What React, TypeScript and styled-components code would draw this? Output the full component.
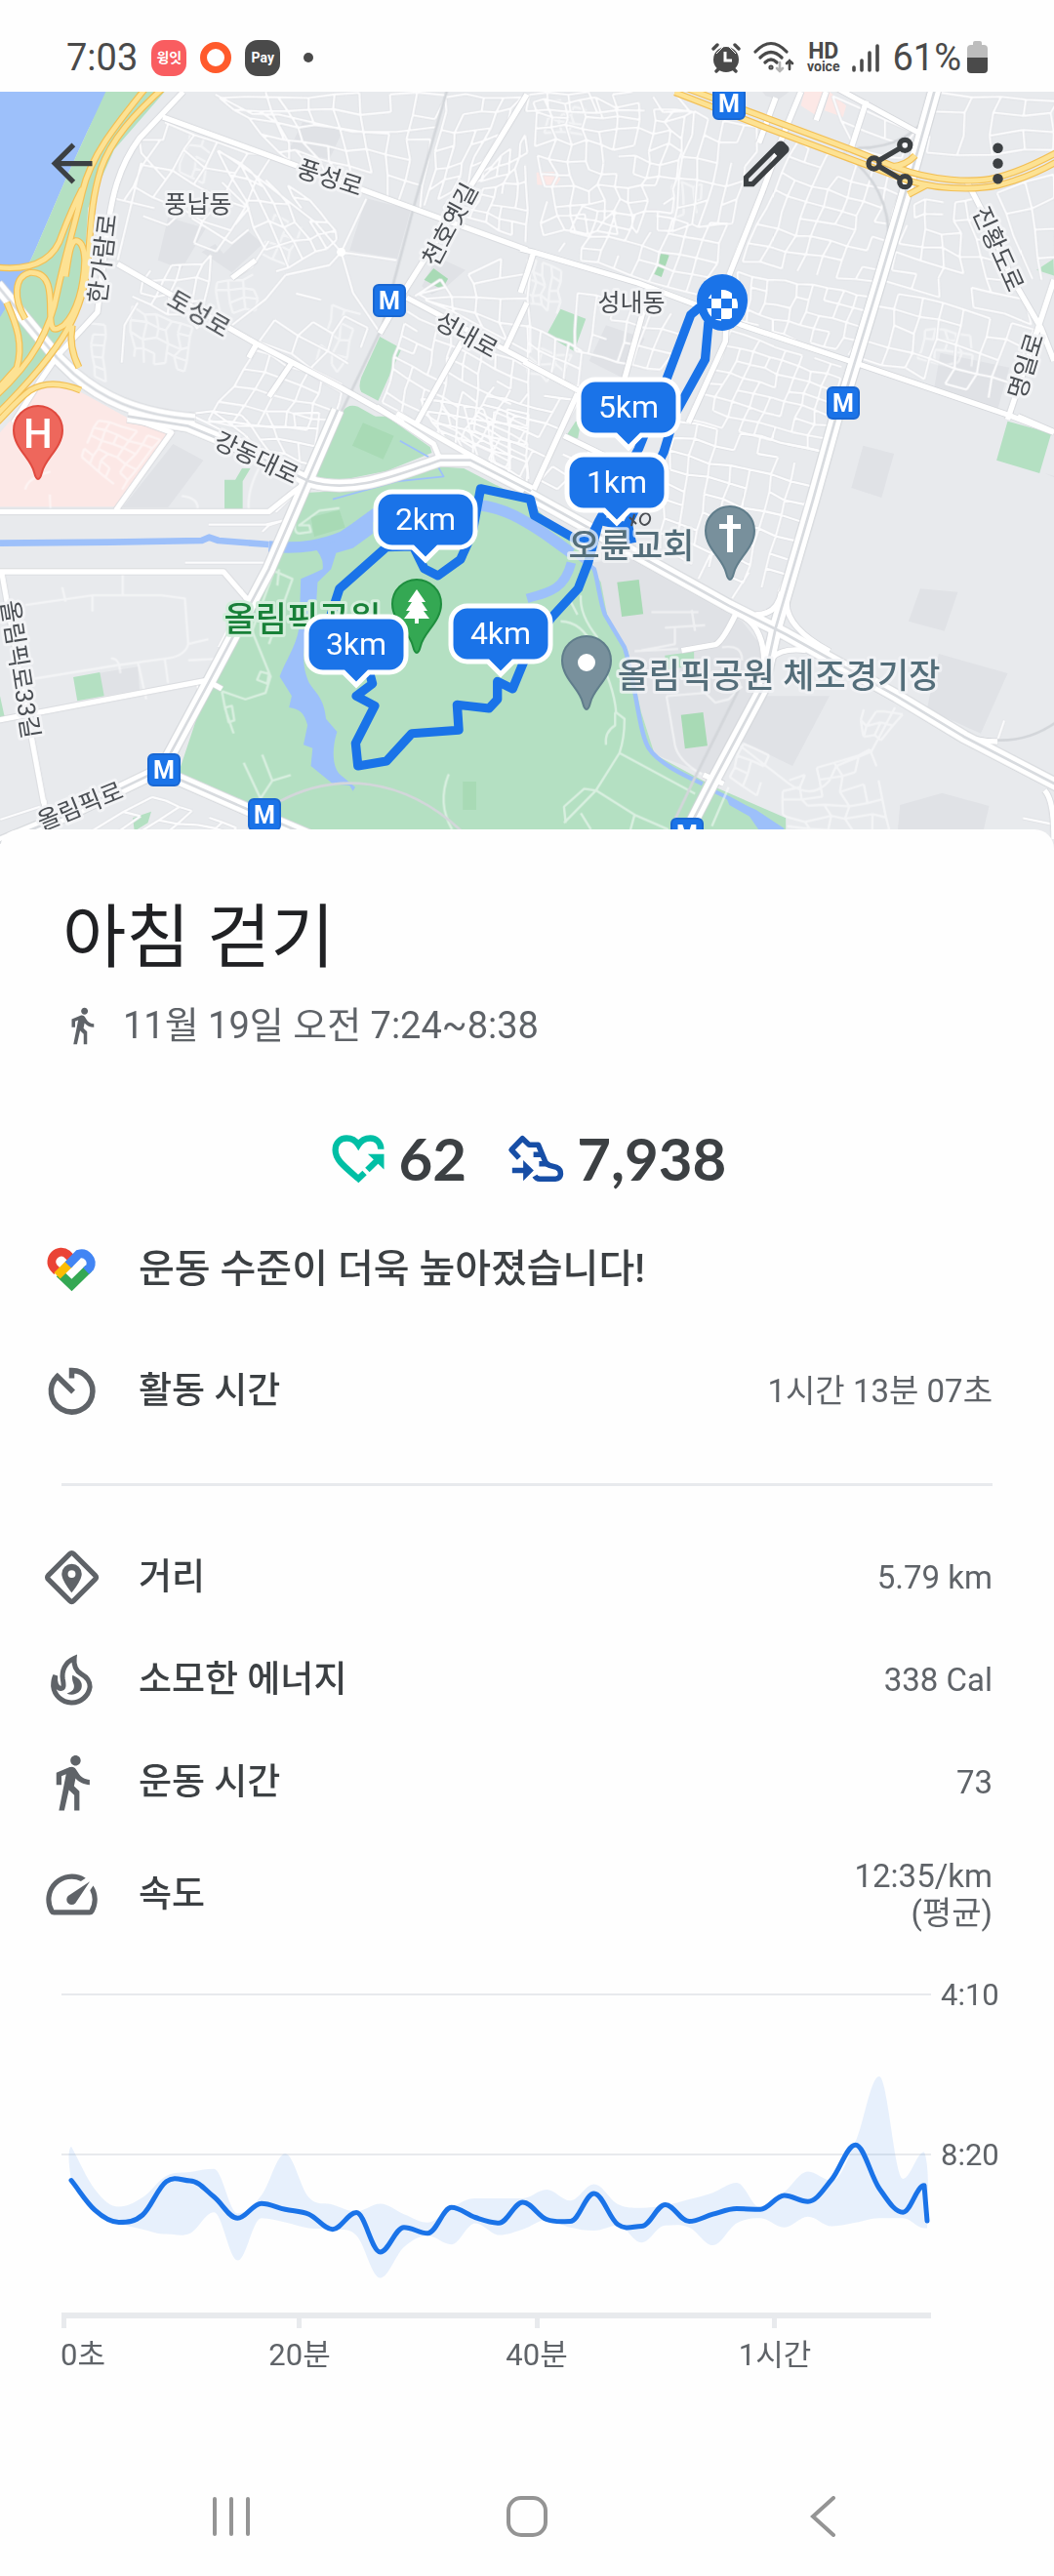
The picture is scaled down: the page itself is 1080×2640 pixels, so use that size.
import React from "react";
import styled, { createGlobalStyle } from "styled-components";

const FONT = 'Roboto, "Noto Sans CJK KR", sans-serif';

const GlobalStyle = createGlobalStyle`
  * { box-sizing: border-box; }
  body { margin: 0; background: #fefefe; font-family: ${FONT}; color: #3c4043; }
  button { font: inherit; color: inherit; background: none; border: 0; padding: 0; cursor: pointer; }
`;

const Screen = styled.main`
  display: flex;
  flex-direction: column;
  min-height: 100vh;
  background: #fefefe;
`;

/* ---------- status bar ---------- */

const StatusBar = styled.header`
  display: flex;
  align-items: center;
  justify-content: space-between;
  height: 94px;
  padding: 24px 68px 0;
  color: #4a4a4a;
`;

const StatusGroup = styled.div<{ $gap: number }>`
  display: flex;
  align-items: center;
  gap: ${(p) => p.$gap}px;
`;

const StatusText = styled.span`
  font-size: 38px;
  line-height: 44px;
`;

const AppBadge = styled.span<{ $color: string }>`
  display: flex;
  align-items: center;
  justify-content: center;
  width: 36px;
  height: 37px;
  border-radius: 13px;
  background: ${(p) => p.$color};
  color: #fff;
  font-size: 14px;
  font-weight: 700;
  line-height: 20px;
`;

const Ring = styled.span`
  width: 32px;
  height: 32px;
  border: 7px solid #ff5a2b;
  border-radius: 50%;
`;

const Dot = styled.span`
  width: 10px;
  height: 10px;
  margin-left: 10px;
  border-radius: 50%;
  background: #4a4a4a;
`;

const HdVoice = styled.span`
  display: flex;
  flex-direction: column;
  align-items: center;
  font-weight: 700;
  font-size: 23px;
  line-height: 18px;
  small {
    font-size: 14px;
    line-height: 12px;
  }
`;

/* ---------- map ---------- */

const MapArea = styled.section`
  position: relative;
  height: 780px;
  overflow: hidden;
  background: #e8eaed;
`;

const MapSvg = styled.svg`
  display: block;
  width: 100%;
  height: 100%;
`;

const Toolbar = styled.nav`
  position: absolute;
  top: 0;
  left: 0;
  right: 0;
  display: flex;
  justify-content: space-between;
  height: 147px;
  padding-right: 10px;
`;

const ToolbarActions = styled.div`
  display: flex;
`;

const ToolButton = styled.button<{ $width: number }>`
  display: flex;
  align-items: center;
  justify-content: center;
  width: ${(p) => p.$width}px;
  height: 147px;
  color: #3c4043;
`;

const Icon = styled.svg<{ $size?: number }>`
  display: block;
  flex: none;
  width: ${(p) => p.$size ?? 63}px;
  height: ${(p) => p.$size ?? 63}px;
  fill: currentColor;
`;

/* ---------- sheet ---------- */

const Sheet = styled.section`
  position: relative;
  flex: 1;
  margin-top: -24px;
  padding-top: 69px;
  border-radius: 20px 20px 0 0;
  background: #fefefe;
`;

const Title = styled.h1`
  margin: 0 64px;
  font-size: 71px;
  font-weight: 400;
  line-height: 84px;
  color: #202124;
`;

const DateLine = styled.p`
  display: flex;
  align-items: center;
  gap: 21px;
  height: 48px;
  margin: 24px 63px 0;
  font-size: 38px;
  line-height: 48px;
  color: #5f6368;
`;

const Scores = styled.div`
  display: flex;
  justify-content: center;
  gap: 40px;
  height: 64px;
  margin-top: 80px;
`;

const Score = styled.div`
  display: flex;
  align-items: center;
  gap: 10px;
  font-family: Lato, sans-serif;
  font-size: 60px;
  font-weight: 700;
  line-height: 64px;
`;

const Message = styled.p`
  display: flex;
  align-items: center;
  gap: 37px;
  height: 105px;
  margin: 29px 42px 20px;
  font-size: 40px;
  font-weight: 500;
  line-height: 48px;
`;

const Metrics = styled.dl`
  margin: 0;
  padding: 0 63px 0 42px;
`;

const Metric = styled.div<{ $tall?: boolean }>`
  display: flex;
  align-items: center;
  gap: 37px;
  height: ${(p) => (p.$tall ? 125 : 105)}px;
  svg { color: #5f6368; }
`;

const MetricName = styled.dt`
  flex: 1;
  font-size: 37px;
  font-weight: 500;
  line-height: 44px;
`;

const MetricValue = styled.dd`
  margin: 0;
  font-size: 33px;
  line-height: 38px;
  text-align: right;
  white-space: pre-line;
  color: #5f6368;
`;

const Divider = styled.hr`
  height: 3px;
  margin: 42px 63px 41px;
  border: 0;
  background: #e8eaed;
`;

const ChartBox = styled.figure`
  margin: 15px 53px 0 63px;
`;

const ChartSvg = styled.svg`
  display: block;
  width: 100%;
  height: auto;
  font-size: 31px;
  fill: #5f6368;
`;

const NavBar = styled.nav`
  display: flex;
  height: 120px;
  margin-top: 80px;
  padding: 0 86px;
`;

const NavButton = styled.button`
  display: flex;
  flex: 1;
  align-items: center;
  justify-content: center;
`;

type Pt = [number, number];

function mesh(q: [Pt, Pt, Pt, Pt], cols: number, rows: number, jitter = 9, seed = 1): string {
  let s = seed * 7919 + cols * 131 + rows * 17;
  const rnd = () => {
    s = (s * 16807) % 2147483647;
    return s / 2147483647;
  };
  const [a, b, c, d] = q;
  const grid: Pt[][] = [];
  for (let r = 0; r <= rows; r++) {
    const line: Pt[] = [];
    for (let k = 0; k <= cols; k++) {
      const u = k / cols;
      const v = r / rows;
      const at = (i: 0 | 1) =>
        (1 - v) * ((1 - u) * a[i] + u * b[i]) + v * ((1 - u) * d[i] + u * c[i]) + (rnd() - 0.5) * 2 * jitter;
      line.push([Math.round(at(0)), Math.round(at(1))]);
    }
    grid.push(line);
  }
  let out = "";
  for (let r = 0; r <= rows; r++)
    for (let k = 0; k <= cols; k++) {
      if (k < cols && rnd() > 0.2) out += `M${grid[r][k]}L${grid[r][k + 1]}`;
      if (r < rows && rnd() > 0.14) out += `M${grid[r][k]}L${grid[r + 1][k]}`;
    }
  return out;
}

interface Tile {
  x: number;
  y: number;
  blocks: string;
  pink: string;
  park: string;
  lawn: string;
  minor: string[];
  faint: string[];
  rail: string;
  major: string;
  dual: string;
  highway: string;
}

const TILES: Tile[] = [
  {
    x: 0,
    y: 0,
    blocks:
      "M900 375L1020 402 980 490 860 462ZM1090 610L1222 645 1182 795 1040 770ZM500 668L612 702 540 828 470 800ZM600 775L640 750 665 780 735 708 782 750 690 838ZM1300 790L1385 830 1330 880 1285 905 1255 880Z",
    pink: "",
    park: "M320 270H500L340 460 262 640 245 900 170 1075 0 1270V975L40 910 100 780 200 540 262 400ZM1130 1035L1195 1072 1125 1232 1075 1205Q1065 1190 1075 1160ZM1010 1300L1020 1265Q1035 1240 1065 1250L1150 1300Z",
    lawn: "M1290 825L1333 857 1315 890 1262 860Z",
    minor: [
      mesh([[500, 385], [800, 490], [640, 780], [360, 620]], 4, 4, 14, 2),
      mesh([[660, 290], [1320, 290], [1240, 640], [870, 500]], 8, 5, 12, 3),
      mesh([[1330, 290], [1550, 300], [1420, 540], [1270, 640]], 4, 6, 10, 4),
      mesh([[1420, 550], [1568, 420], [1568, 740], [1320, 640]], 6, 7, 7, 5),
      mesh([[650, 470], [900, 590], [1010, 740], [830, 840]], 5, 5, 12, 6),
      mesh([[450, 840], [640, 790], [600, 1000], [400, 920]], 4, 3, 14, 7),
      mesh([[880, 900], [1100, 1000], [1010, 1190], [780, 1040]], 3, 3, 12, 8),
      mesh([[760, 1070], [1010, 1200], [990, 1320], [620, 1300]], 5, 4, 8, 9),
      mesh([[1210, 960], [1568, 1130], [1568, 1500], [1140, 1240]], 8, 8, 5, 10),
      mesh([[1230, 900], [1568, 770], [1568, 1080], [1290, 930]], 4, 4, 10, 11),
      "M790 282L810 350 860 440V490M640 290L750 350 830 352 1050 405H1180L1300 390M1015 775L1180 800M1015 775L980 815 850 845M1015 775L1090 610M1015 775L940 685 760 540 650 462M1015 775L1050 900 1125 1015M850 845L790 920 690 1000M415 430L420 470 490 550M415 430H485L500 380M340 610L460 640M570 670L690 748 740 705M690 855L750 820 800 740M410 930L370 1000 362 1115M660 560L740 640 700 690M420 500L350 800",
    ],
    faint: [
      mesh([[570, 410], [640, 440], [600, 560], [530, 530]], 2, 4, 6, 2),
      mesh([[400, 950], [580, 1010], [550, 1140], [390, 1100]], 5, 4, 10, 3),
      mesh([[650, 860], [760, 850], [760, 950], [650, 960]], 3, 3, 8, 4),
      mesh([[820, 660], [895, 700], [850, 810], [780, 780]], 2, 3, 5, 5),
      mesh([[990, 940], [1070, 960], [1010, 1140], [950, 1110]], 2, 4, 8, 6),
      mesh([[270, 990], [310, 1000], [310, 1170], [280, 1160]], 1, 5, 5, 7),
    ],
    rail: "M1332 270L1230 640 1135 1010 1000 1300",
    major:
      "M545 282L415 425C340 530 330 640 320 700L290 960 170 1095 120 1170 40 1300M485 360L870 505 1280 660 1568 768M350 812L760 1055 1010 1190 1200 1300M1568 290L1420 540 1200 900 1130 1025M1210 915L1568 1112M1568 930L1500 1080M1375 1050L1240 1300M690 855L760 800M765 1055L740 1100M865 1120L800 1220",
    dual: "M-10 875L170 1100 220 1150C300 1220 400 1275 580 1290",
    highway:
      "M440 262C340 390 270 480 245 590C215 720 190 800 170 900C150 1010 100 1110 -10 1215M490 266C400 350 330 430 300 520C270 620 270 700 262 800C250 950 200 1060 -10 1275M-10 822C110 835 165 790 185 720C215 640 230 610 245 580M75 980C40 920 40 850 90 838C150 835 150 900 150 960C150 1020 160 1020 190 1000C230 960 250 880 252 800C250 750 235 740 225 740C210 745 205 780 195 850M20 930C50 1000 70 1060 50 1130L-10 1200M215 1000C205 1060 220 1100 235 1130M240 1200C180 1175 130 1175 90 1200C50 1230 20 1270 -10 1300",
  },
  {
    x: 1568,
    y: 0,
    blocks: "M235 1000L350 1040 290 1165 185 1110ZM1230 1085L1435 1130 1400 1260 1210 1200ZM700 282H780L750 305 710 295Z",
    pink: "M825 282H880L860 355 815 325ZM900 282L950 325 940 360 885 340ZM28 530L85 528 100 550 85 572 30 568Z",
    park: "M100 950L175 980 140 1080 58 1030ZM1516 830L1575 790V850Z",
    lawn: "M400 775L423 785 400 852 372 840Z",
    minor: [
      mesh([[10, 300], [480, 330], [420, 700], [60, 720]], 9, 9, 15, 12),
      mesh([[490, 340], [690, 400], [600, 680], [440, 700]], 4, 5, 12, 13),
      mesh([[160, 640], [650, 700], [580, 930], [100, 780]], 9, 4, 7, 14),
      mesh([[0, 290], [440, 290], [480, 340], [0, 340]], 7, 1, 8, 15),
      mesh([[800, 430], [1120, 560], [1040, 870], [640, 800]], 7, 7, 8, 16),
      mesh([[630, 840], [1030, 910], [960, 1090], [610, 980]], 9, 4, 5, 17),
      mesh([[610, 1020], [940, 1130], [880, 1385], [480, 1290]], 8, 7, 6, 18),
      mesh([[1160, 620], [1330, 620], [1500, 990], [1060, 860]], 5, 6, 12, 19),
      mesh([[1050, 880], [1500, 1010], [1440, 1240], [1000, 1100]], 7, 4, 10, 20),
      mesh([[1230, 290], [1568, 300], [1568, 460], [1180, 480]], 4, 3, 12, 21),
      mesh([[1400, 590], [1568, 530], [1568, 870], [1500, 860]], 2, 4, 8, 22),
      mesh([[910, 300], [1150, 410], [1110, 490], [970, 450]], 3, 2, 6, 23),
      mesh([[150, 900], [480, 970], [400, 1140], [140, 1080]], 6, 3, 5, 24),
      mesh([[0, 1000], [160, 1080], [150, 1190], [0, 1110]], 4, 2, 5, 25),
    ],
    faint: [
      mesh([[60, 310], [180, 330], [160, 420], [60, 400]], 3, 3, 10, 8),
      mesh([[430, 560], [530, 570], [520, 660], [450, 660]], 3, 2, 10, 9),
      mesh([[0, 800], [100, 830], [90, 960], [0, 930]], 4, 4, 8, 10),
      mesh([[1180, 1010], [1320, 1030], [1330, 1130], [1160, 1100]], 4, 3, 10, 11),
      mesh([[10, 1060], [130, 1100], [100, 1180], [0, 1140]], 3, 2, 10, 12),
    ],
    rail: "M970 455C1100 460 1170 400 1200 340M940 470C1040 540 1080 640 1075 740",
    major:
      "M-20 765L20 775 330 870 510 940 640 1000 960 1110 1430 1275 1568 1330M20 775L0 840-20 900M-10 1112L160 1205M815 282L760 420 700 590 600 850 590 1050 480 1300M890 282L860 370M740 300L690 440M920 270L1165 408M1010 310L960 470M1310 560L1360 660 1440 850 1530 1010 1568 1110M1568 860L1520 1010 1430 1290M350 940L290 1165",
    dual: "M1215 270L1150 510 1050 860 950 1200",
    highway:
      "M440 258L700 358 960 458 1100 515C1200 555 1330 565 1400 545C1460 530 1520 500 1575 470M440 284L700 388 960 488 1100 542C1200 585 1330 585 1400 570C1460 555 1520 530 1575 498M1085 512C1120 510 1140 495 1155 478M1135 598L1190 568",
  },
  {
    x: 0,
    y: 1290,
    blocks: "M515 75L605 125 500 270H365ZM290 780L410 760 415 830 310 850Z",
    pink: "M0 268H345L500 40 380-5 240-85C180-108 130-105 100-80L0 40Z",
    park: "M1005-10H1150L1280 85 1285 102 1150 158 1020 185 940 178ZM905 225L1100 215 1300 145 1380 150 1568 250 1698 370 1758 450 1788 500 1808 610 1868 710 1908 900 1948 1030 2128 1130 2338 1225V1300H980L900 1262 530 1090 620 810 740 560 830 390ZM668 185H700L720 150H745L722 190V275H668ZM218 792L297 777 310 850 230 865ZM395 1225L450 1205 440 1240 400 1265ZM0 850L15 920H0Z",
    lawn: "M1080 10L1172 50 1140 122 1048 80ZM1377 1113H1417V1200H1377ZM925 300L1010 278 1027 332 935 360Z",
    minor: [
      mesh([[560, -20], [950, -20], [930, 140], [720, 60]], 5, 3, 8, 26),
      mesh([[450, 1160], [700, 1250], [680, 1310], [200, 1310]], 6, 3, 6, 27),
      mesh([[1250, -60], [1568, -20], [1568, 180], [1330, 70]], 5, 4, 5, 28),
      "M550 440H785M620 323H790L845 310M865 240L820 285M585 810L600 870M720 560L650 700M165 1230L130 1180M780 345L800 325 840 312M0 1230L120 1190",
    ],
    faint: [
      mesh([[290, 0], [480, 60], [360, 215], [240, 115]], 5, 5, 5, 13),
      "M75 570L275 540H480L550 550 560 690Q550 730 490 735L350 755 80 800M275 540V590M365 470V540M195 560L185 515M410 745L435 860M490 735L500 810M560 740L650 735M560 690L620 675M330 735Q355 730 358 780M660 835L730 860 790 840 805 790 750 650 815 465M815 465L870 490 800 690M830 460L825 510M725 1055L775 1165 810 1110 865 1093M810 1110L780 1030M660 835L670 890 695 965M670 885L690 880 697 925 680 930ZM765 800L775 775 800 782 795 812ZM880 290Q870 350 890 350L925 345 920 325 890 325 950 280 1010 272M1335 1090Q1300 1180 1345 1260M540 235Q590 240 588 275M75 215Q80 180 150 160M150 275L148 230M740 275Q735 220 770 150",
    ],
    rail: "M830 1175C1000 1080 1200 1100 1370 1262",
    major:
      "M-10 283H800L870 225 910 195M345 278L510 40 380-10M-10 468H665L735 552M5 470L60 790 130 1180M-10 925L610 803M620 805L660 828M1120-40L1210 20 1290 75 1312 130M1180-20L1400 110 1568 205M140 1240L130 1170",
    dual: "M380-10L560 20 700 80 920 190C1050 230 1180 170 1310 125H1400L1580 220M-10 1305L200 1215 460 1085M530 1105L740 1200 920 1280M1005-30L800 460 620 810 500 1040",
    highway: "",
  },
  {
    x: 1568,
    y: 1290,
    blocks:
      "M190 440L300 425 640 620 700 700 690 830 560 1100 380 1030 340 900 300 710 240 610ZM690 850L900 850 790 1065 640 990ZM1225 720L1430 780 1350 965 1190 890ZM1000 80L1092 105 1055 240 965 210ZM1170 520L1282 530 1242 650 1135 620ZM1110 1185L1235 1148 1375 1188 1350 1300H1100ZM1540 165L1575 175V180Z",
    pink: "",
    park: "M1430 5L1560 42 1525 165 1397 125ZM410 725L497 713V755L415 770ZM120 45L145 5 160 10 150 65Z",
    lawn: "M268 500L333 492 346 598 282 606ZM458 908L524 900 537 1003 470 1012Z",
    minor: [
      mesh([[-100, -100], [150, -60], [20, 210], [-200, 60]], 5, 6, 4, 29),
      mesh([[440, 0], [880, 95], [750, 535], [390, 400]], 7, 8, 7, 30),
      mesh([[140, 60], [300, 150], [200, 270], [40, 190]], 3, 3, 5, 31),
      "M610 550L660 470M510 490L545 415M1400 985L1420 925M1475 1225L1568 1245",
    ],
    faint: [
      mesh([[640, 1000], [720, 1030], [680, 1150], [600, 1100]], 2, 3, 6, 14),
      mesh([[770, 1120], [1030, 1020], [1090, 1260], [770, 1260]], 5, 5, 12, 15),
      mesh([[990, 890], [1110, 900], [1060, 990], [990, 960]], 3, 2, 12, 16),
      "M100 620Q160 620 200 700Q260 820 265 900L290 920Q290 980 275 1025L205 1140 110 1240M275 1025L500 1150M235 1000Q230 960 262 940V900M205 1140L320 1215 300 1290M205 1140L170 1135 110 1190 115 1240M320 1215L420 1260M160 540Q155 600 210 670M130 560L150 600M160 1210L190 1260M600 1130L550 1250M340 710L440 690V640M410 640L530 632M370 592H510M490 585L500 650M320 712L450 705M415 850L440 1000Q450 1050 520 1090M415 850L530 840 560 870 600 860 640 820M580 700Q640 690 640 740M780 1120Q850 1170 900 1110L920 1065 1025 1020 1095 885M630 1000L780 1120",
    ],
    rail: "M1270 955C1400 1010 1500 985 1575 930M630 830L500 1100 440 1230",
    major:
      "M620 600Q580 685 560 692L460 710M650 610Q705 650 705 745M680 600Q745 600 757 530M772 560Q770 640 900 712M725 735Q760 700 830 710M110 50L230 110M150-80L20 215M1460-10L1568 38M525 1092L585 1120M1250 955Q1330 990 1400 990M1540 1140Q1568 1170 1568 1290",
    dual: "M-10 222L300 400 600 572 770 660 1100 850 1300 975 1580 1125M920-10L850 250 740 640 700 830 550 1120 470 1280",
    highway: "",
  },
];

type LayerKey = "blocks" | "pink" | "park" | "lawn" | "minor" | "faint" | "rail" | "major" | "dual" | "highway";

function Layer({ of, fill = "none", stroke, width = 1 }: { of: LayerKey; fill?: string; stroke?: string; width?: number }) {
  return (
    <g fill={fill} stroke={stroke} strokeWidth={width} strokeLinejoin="round">
      {TILES.map((t) => {
        const v = t[of];
        const d = Array.isArray(v) ? v.join("") : v;
        return d ? <path key={`${t.x}-${t.y}`} transform={`translate(${t.x} ${t.y})`} d={d} /> : null;
      })}
    </g>
  );
}

const ROUTE =
  "M2100-350L2078-342 2055-322 1978-110 1900 90 1783 310 1755 368 1708 365 1590 295 1578 245 1430 212 1405 350 1370 430 1303 480 1262 458 1230 390 1150 392 1010 520 985 600 1100 780 1108 812 1060 850 1115 880 1058 995 1065 1065 1150 1050 1225 965 1365 955 1360 877 1455 888 1480 860V805L1525 828 1568 720 1640 610 1720 520 1750 440 1783 310M2108-300L2098-185 2010-20 1975 100 1868 320 1880 380M1783 310L1868 330";

const KM_PINS: { label: string; x: number; y: number }[] = [
  { label: "2km", x: 436, y: 578 },
  { label: "4km", x: 513, y: 695 },
  { label: "3km", x: 365, y: 706 },
  { label: "5km", x: 644, y: 463 },
  { label: "1km", x: 632, y: 540 },
];

const STREET_NAMES: { text: string; x: number; y: number; turn: number }[] = [
  { text: "풍납동", x: 203, y: 209, turn: 0 },
  { text: "풍성로", x: 338, y: 182, turn: 18 },
  { text: "천호옛길", x: 461, y: 230, turn: -62 },
  { text: "한가람로", x: 105, y: 265, turn: -83 },
  { text: "토성로", x: 204, y: 321, turn: 30 },
  { text: "성내로", x: 478, y: 343, turn: 29 },
  { text: "성내동", x: 647, y: 310, turn: 0 },
  { text: "진황도로", x: 1023, y: 255, turn: 66 },
  { text: "명일로", x: 1051, y: 375, turn: -73 },
  { text: "강동대로", x: 263, y: 469, turn: 25 },
  { text: "올림픽로33길", x: 21, y: 686, turn: 81 },
  { text: "올림픽로", x: 82, y: 826, turn: -22 },
];

const STATIONS: Pt[] = [
  [399, 308],
  [747, 106],
  [864, 413],
  [168, 789],
  [271, 835],
  [704, 855],
];

function Place({ x, y, fill, edge, children }: { x: number; y: number; fill: string; edge: string; children: React.ReactNode }) {
  return (
    <g transform={`translate(${x} ${y})`}>
      <path
        d="M0-1C-2-1-3-4-4-8C-7-22-25-33-25-51A25 25 0 0 1 25-51C25-33 7-22 4-8C3-4 2-1 0-1Z"
        fill={fill}
        stroke={edge}
        strokeWidth={2}
      />
      {children}
    </g>
  );
}

function WalkMap() {
  return (
    <MapSvg viewBox="0 94 1080 780" preserveAspectRatio="xMidYMin slice" role="img" aria-label="걷기 경로 지도">
      <g transform="scale(0.34439 0.33333)">
        <rect width={3136} height={2700} fill="#e8eaed" />
        <path d="M0 270H326L262 400 200 540 100 780 40 910 0 985Z" fill="#9dc0fa" />
        <Layer of="blocks" fill="#e0e2e6" />
        <Layer of="pink" fill="#fce8e6" />
        <Layer of="park" fill="#b4e0c2" />
        <Layer of="lawn" fill="#a8dab5" />
        <g transform="translate(0 1290)" fill="none" stroke="#9dc0fa" strokeLinejoin="round">
          <path d="M0 380L330 377 600 372 622 362 650 372 800 384" strokeWidth={20} />
          <path d="M800 390C900 400 960 385 1020 360C1080 320 1100 300 1130 280" strokeWidth={34} />
          <path d="M1420 262C1500 270 1560 310 1620 350L1700 410" strokeWidth={34} />
          <path d="M1700 440C1680 520 1640 530 1568 550" strokeWidth={28} />
          <path d="M1690 400L1768 460C1780 500 1785 560 1800 600L1858 700C1890 800 1900 960 1930 1010C1960 1060 2050 1100 2090 1120" strokeWidth={13} />
          <path d="M2120 1140L2170 1165 2260 1215 2330 1262" strokeWidth={12} />
          <path d="M2160 1160L2250 1200 2340 1265H2260L2230 1220 2170 1185Z" fill="#9dc0fa" stroke="none" />
          <path d="M990 245L1180 190 1320 175 1305 148M1190 65L1275 115" strokeWidth={5} />
          <path
            d="M930 390Q965 420 960 460 930 475 895 490L890 640C880 700 850 740 832 790L868 850 860 885C890 890 905 900 915 940L903 1000 930 1010 925 1065 990 1120 1040 1125 1050 1142 1057 1130 1010 1090C985 1060 990 1000 1003 960L970 920C965 860 940 840 920 810C890 740 910 700 912 640L940 580 945 500 985 460 1000 410 1050 395 1110 350V300L1000 375Z"
            fill="#9dc0fa"
            stroke="none"
          />
        </g>
        <g opacity={0.5}>
          <Layer of="faint" stroke="#ffffff" width={7} />
        </g>
        <Layer of="minor" stroke="#d9dbdf" width={9} />
        <Layer of="minor" stroke="#fcfcfd" width={7} />
        <Layer of="rail" stroke="#d3d6da" width={8} />
        <Layer of="major" stroke="#d3d5d9" width={20} />
        <Layer of="dual" stroke="#cfd2d6" width={42} />
        <Layer of="major" stroke="#ffffff" width={16} />
        <Layer of="dual" stroke="#ffffff" width={37} />
        <Layer of="dual" stroke="#d8dbdf" width={8} />
        <Layer of="highway" stroke="#f2bf55" width={21} />
        <Layer of="highway" stroke="#fde293" width={14} />
        <circle cx={1015} cy={775} r={13} fill="#fff" />
        <path
          transform="translate(0 1290)"
          d={ROUTE}
          fill="none"
          stroke="#1a73e8"
          strokeWidth={27}
          strokeLinejoin="round"
        />
      </g>

      <g fontFamily={FONT} textAnchor="middle" stroke="#f3f4f6" strokeWidth={6} strokeLinejoin="round" paintOrder="stroke">
        <g fontSize={25} fill="#4a4e53">
          {STREET_NAMES.map((s) => (
            <text key={s.text} transform={`translate(${s.x} ${s.y}) rotate(${s.turn})`} y={9}>
              {s.text}
            </text>
          ))}
        </g>
        <g fontSize={35} fontWeight={500}>
          <text x={310} y={647} fill="#188038" stroke="#d5eedd">
            올림픽공원
          </text>
          <text x={647} y={572} fill="#546e7a" strokeOpacity={0.75}>
            오륜교회
          </text>
          <text x={798} y={705} fill="#546e7a" strokeOpacity={0.8}>
            올림픽공원 체조경기장
          </text>
        </g>
      </g>
      <g fill="none" stroke="#4a4e53" strokeWidth={2}>
        <ellipse cx={661} cy={532} rx={5} ry={6} transform="rotate(20 661 532)" />
        <path d="M645 530L652 537M650 527L647 539" />
      </g>

      {STATIONS.map(([x, y]) => (
        <g key={`${x}-${y}`} transform={`translate(${x} ${y})`}>
          <rect x={-16} y={-16} width={32} height={32} rx={5} fill="#1a73e8" stroke="#1967d2" strokeWidth={2} />
          <text y={9} textAnchor="middle" fontFamily={FONT} fontSize={25} fontWeight={700} fill="#fff">
            M
          </text>
        </g>
      ))}

      <Place x={39} y={492} fill="#ee675c" edge="#e04a3f">
        <text y={-33} textAnchor="middle" fontFamily={FONT} fontSize={42} fontWeight={500} fill="#fff">
          H
        </text>
      </Place>
      <Place x={427} y={670} fill="#34a853" edge="#1e8e3e">
        <path d="M0-66L9-53H5L11-44H7L13-36H2V-31H-2V-36H-13L-7-44H-11L-5-53H-9Z" fill="#fff" />
      </Place>
      <Place x={748} y={595} fill="#78909c" edge="#607d8b">
        <path d="M-3-67H3V-58H11V-53H3V-29H-3V-53H-11V-58H-3Z" fill="#fff" />
      </Place>
      <Place x={601} y={728} fill="#78909c" edge="#607d8b">
        <circle cy={-49} r={9} fill="#fff" />
      </Place>

      {KM_PINS.map((p) => (
        <g key={p.label} transform={`translate(${p.x} ${p.y})`}>
          <path
            d="M-34-74H34A17 17 0 0 1 51-57V-34A17 17 0 0 1 34-17H13L0-4L-13-17H-34A17 17 0 0 1-51-34V-57A17 17 0 0 1-34-74Z"
            fill="#1a73e8"
            stroke="#fff"
            strokeWidth={5}
          />
          <text y={-35} textAnchor="middle" fontFamily={FONT} fontSize={32} fill="#fff">
            {p.label}
          </text>
        </g>
      ))}

      <g transform="translate(740 307)">
        <path d="M0-26A26 26 0 0 1 26 0C26 18 14 32 0 32C-14 32-26 18-26 0A26 26 0 0 1 0-26Z" fill="#1a73e8" />
        <clipPath id="flag">
          <circle cy={6} r={16} />
        </clipPath>
        <path
          clipPath="url(#flag)"
          d="M-1-10H10V-1H-1ZM-20-10H-11V-1H-20ZM-11-1H-1V9H-11ZM10-1H20V9H10ZM-1 9H10V20H-1ZM-20 9H-11V20H-20ZM-11 20H-1V26H-11Z"
          fill="#fff"
        />
      </g>
    </MapSvg>
  );
}

/* ---------- pace chart ---------- */

const AVERAGE = [
  577, 652, 682, 664, 580, 578, 618, 672, 635, 650, 662, 700, 658, 757, 695, 710, 645, 670, 684, 632, 675, 680, 610, 688,
  692, 638, 680, 662, 648, 650, 615, 630, 575, 488, 597, 657, 590,
];
const FASTEST = [
  492, 600, 643, 620, 566, 556, 548, 660, 615, 510, 620, 638, 655, 636, 662, 683, 645, 622, 622, 622, 600, 628, 587, 637,
  646, 640, 625, 608, 583, 646, 607, 555, 578, 480, 316, 573, 506,
];
const SLOWEST = [
  577, 660, 685, 700, 712, 710, 657, 778, 672, 682, 697, 700, 715, 822, 745, 716, 738, 685, 714, 700, 676, 695, 703, 690,
  733, 690, 695, 740, 685, 672, 695, 668, 692, 683, 672, 672, 697,
];

const chartX = (i: number) => (i === 36 ? 884 : 10 + 24.35 * i);
const chartY = (v: number) => v * 0.4082 - 20;

interface Knot {
  x: number;
  y: number;
  m: number;
}

/* Slopes are zero at peaks and dips, so the curve never overshoots a sample. */
function curve(values: number[]): Knot[] {
  const pts = values.map((v, i) => ({ x: chartX(i), y: chartY(v) }));
  return pts.map((p, i) => {
    if (i === 0) return { ...p, m: (pts[1].y - p.y) / (pts[1].x - p.x) };
    if (i === pts.length - 1) return { ...p, m: 0 };
    const l = (p.y - pts[i - 1].y) / (p.x - pts[i - 1].x);
    const r = (pts[i + 1].y - p.y) / (pts[i + 1].x - p.x);
    return { ...p, m: l * r <= 0 ? 0 : (l + r) / 2 };
  });
}

function trace(pts: Knot[]): string {
  return pts
    .slice(1)
    .map((p, i) => {
      const a = pts[i];
      const h = (p.x - a.x) / 2.8;
      return `C${(a.x + h).toFixed(1)} ${(a.y + a.m * h).toFixed(1)} ${(p.x - h).toFixed(1)} ${(p.y - p.m * h).toFixed(1)} ${p.x.toFixed(1)} ${p.y.toFixed(1)}`;
    })
    .join("");
}

function PaceChart() {
  const avg = curve(AVERAGE);
  const top = curve(FASTEST);
  const low = curve(SLOWEST).reverse();
  const band = `M${top[0].x} ${top[0].y}${trace(top)}Q890 200 887 ${low[0].y}L${low[0].x} ${low[0].y}${trace(low)}Q5 185 ${top[0].x} ${top[0].y}Z`;
  return (
    <ChartSvg viewBox="0 0 964 420" fontFamily={FONT} role="img" aria-label="시간별 속도">
      <path d="M0 25H891M0 189H891" stroke="#e8eaed" strokeWidth={2} />
      <path d={band} fill="#1a73e8" fillOpacity={0.1} />
      <path
        d={`M${avg[0].x} ${avg[0].y}${trace(avg)}L887 257`}
        fill="none"
        stroke="#1a73e8"
        strokeWidth={5}
        strokeLinecap="round"
        strokeLinejoin="round"
      />
      <path d="M0 351H891V357H0ZM0 357H5V367H0ZM241 357H246V367H241ZM485 357H490V367H485ZM728 357H733V367H728Z" fill="#e8eaed" />
      <text x={901} y={36}>4:10</text>
      <text x={901} y={200}>8:20</text>
      <text x={-1} y={405}>0초</text>
      <g textAnchor="middle">
        <text x={244} y={405}>20분</text>
        <text x={487} y={405}>40분</text>
        <text x={731} y={405}>1시간</text>
      </g>
    </ChartSvg>
  );
}

/* ---------- icons ---------- */

const WALK =
  "M13.5 5.5c1.1 0 2-.9 2-2s-.9-2-2-2-2 .9-2 2 .9 2 2 2zM9.8 8.9 7 23h2.1l1.8-8 2.1 2v6h2v-7.5l-2.1-2 .6-3C14.8 12 16.8 13 19 13v-2c-1.9 0-3.5-1-4.3-2.4l-1-1.6c-.4-.6-1-1-1.7-1-.3 0-.5.1-.8.1L6 8.3V13h2V9.6l1.8-.7z";

const WalkIcon = ({ size }: { size?: number }) => (
  <Icon viewBox="0 0 24 24" $size={size}>
    <path d={WALK} />
  </Icon>
);

const TimerIcon = () => (
  <Icon viewBox="0 0 24 24">
    <path d="M12 7V4A8.1 8.1 0 1 1 6.4 6.3L12.6 12.4" fill="none" stroke="currentColor" strokeWidth={2.1} strokeLinejoin="miter" />
  </Icon>
);

const DistanceIcon = () => (
  <Icon viewBox="0 0 24 24">
    <path d="M11.2 2.9Q12 2.1 12.8 2.9L21.1 11.2Q21.9 12 21.1 12.8L12.8 21.1Q12 21.9 11.2 21.1L2.9 12.8Q2.1 12 2.9 11.2Z" fill="none" stroke="currentColor" strokeWidth={2} />
    <path fillRule="evenodd" d="M12 6.8A3.9 3.9 0 0 0 8.1 10.7C8.1 13.4 12 18 12 18S15.9 13.4 15.9 10.7A3.9 3.9 0 0 0 12 6.8ZM12 12.2A1.5 1.5 0 1 1 12 9.2A1.5 1.5 0 0 1 12 12.2Z" />
  </Icon>
);

const FireIcon = () => (
  <Icon viewBox="0 0 24 24">
    <path d="M13 3.6C9.3 5.2 8 8.6 8.5 11.8C9 14.4 8.9 15.5 7.7 15.4C6 15.2 5.3 13 5.6 10.4C4.9 11.6 4.8 13 4.8 14.5A7.2 7.1 0 0 0 19.1 14.8C19.1 12.2 17.8 10.9 15.8 9.8C13.4 8.4 12.7 6.4 13 3.6Z" fill="none" stroke="currentColor" strokeWidth={1.9} strokeLinejoin="miter" />
    <path d="M12.3 10.2C15 11.3 16.2 13 15.9 14.8C15.6 17.2 12.4 18.6 10.1 17.3C12.2 16.8 13.3 15.4 12.8 13.8C12.3 12.6 12 11.5 12.3 10.2Z" />
  </Icon>
);

const SpeedIcon = () => (
  <Icon viewBox="0 0 24 24">
    <path d="M20.38 8.57l-1.23 1.85a8 8 0 0 1-.22 7.58H5.07A8 8 0 0 1 15.58 6.85l1.85-1.23A10 10 0 0 0 3.35 19a2 2 0 0 0 1.72 1h13.85a2 2 0 0 0 1.74-1 10 10 0 0 0-.27-10.44zm-9.79 6.84a2 2 0 0 0 2.83 0l5.66-8.49-8.49 5.66a2 2 0 0 0 0 2.83z" />
  </Icon>
);

const FitIcon = () => (
  <Icon viewBox="0 0 24 24">
    <g fill="none" strokeWidth={3.4}>
      <path d="M7.2 13.7L12 18.3L18.6 11.8" stroke="#34a853" />
      <path d="M6.3 12.9L4.9 11.4A3.75 3.75 0 0 1 10.2 6.2L12.4 8.4" stroke="#ea4335" />
      <path d="M6.3 14.6L11.4 9.6" stroke="#fbbc04" />
      <path d="M10.6 10.4L14.7 6.2A3.75 3.75 0 0 1 19.1 11.4L17.6 12.8" stroke="#4285f4" />
    </g>
  </Icon>
);

const HeartPointsIcon = () => (
  <Icon viewBox="0 0 24 24">
    <path d="M20.7 8.3C20.7 5.6 18.8 4 16.6 4C14.6 4 12.9 5 11.9 6.6C10.9 5 9.2 4 7.3 4C4.7 4 2.9 5.9 2.9 8.6C2.9 12.4 6.2 14.9 11.9 19.8L14.3 17.5" fill="none" stroke="#00bfa5" strokeWidth={2.4} />
    <path d="M15.4 16.4L19.7 12.2" stroke="#00bfa5" strokeWidth={2.4} />
    <path d="M15.6 10.2H21.9V16.2Z" fill="#00bfa5" />
  </Icon>
);

const StepsIcon = () => (
  <Icon viewBox="0 0 24 24">
    <g fill="none" stroke="#174ea6" strokeWidth={2.1} strokeLinejoin="round">
      <path d="M5.3 11.8L2.3 8.5L6.6 4.1L9.2 6.6H12.8L15.2 12.4Q15.6 14 17.2 14.6L20 15.4C22 16.3 22.2 19.9 19.5 19.9H13.4Q12 19.8 11.4 18.7" />
      <path d="M10.9 10.4H14.3M13.1 14H16.6M2.6 16.6H8" />
    </g>
    <path d="M6.9 12.6L11 16.6L6.9 20.7Z" fill="#174ea6" />
  </Icon>
);

interface MetricRow {
  icon: React.ReactNode;
  name: string;
  value: string;
}

const METRICS: MetricRow[] = [
  { icon: <DistanceIcon />, name: "거리", value: "5.79 km" },
  { icon: <FireIcon />, name: "소모한 에너지", value: "338 Cal" },
  { icon: <WalkIcon />, name: "운동 시간", value: "73" },
  { icon: <SpeedIcon />, name: "속도", value: "12:35/km\n(평균)" },
];

function MetricItem({ icon, name, value }: MetricRow) {
  return (
    <Metric $tall={value.includes("\n")}>
      {icon}
      <MetricName>{name}</MetricName>
      <MetricValue>{value}</MetricValue>
    </Metric>
  );
}

export default function App() {
  return (
    <Screen>
      <GlobalStyle />
      <StatusBar>
        <StatusGroup $gap={14}>
          <StatusText>7:03</StatusText>
          <AppBadge $color="#f95d60">윙잇</AppBadge>
          <Ring />
          <AppBadge $color="#4a4a4a">Pay</AppBadge>
          <Dot />
        </StatusGroup>
        <StatusGroup $gap={13}>
          <svg width={30} height={31} viewBox="0 0 30 31" fill="#4a4a4a">
            <circle cx={15} cy={17} r={13} />
            <path d="M2 6L6 2M24 2L28 6M5 29L8 26M25 29L22 26" stroke="#4a4a4a" strokeWidth={3.4} strokeLinecap="round" />
            <path d="M5 11L12 4M18 4L25 11" stroke="#fefefe" strokeWidth={1} />
            <path d="M14 9V18H21" fill="none" stroke="#fff" strokeWidth={3} />
          </svg>
          <svg width={42} height={34} viewBox="0 0 42 34" fill="none" stroke="#4a4a4a" strokeWidth={3.2} strokeLinecap="round">
            <path d="M2 11Q18-6 34 11M7 17Q18 6 29 17M12 22Q18 16 24 22" />
            <circle cx={18} cy={27} r={1} />
            <path d="M37 29V20M34 23L37 20L40 23" strokeWidth={2.6} />
            <path d="M27 22V31M24 28L27 31L30 28" stroke="#b5b5b5" strokeWidth={2.6} />
          </svg>
          <HdVoice>
            HD<small>voice</small>
          </HdVoice>
          <svg width={28} height={30} viewBox="0 0 28 30" stroke="#4a4a4a" strokeWidth={3.6} strokeLinecap="round">
            <path d="M2 25V28M10 18V28M18 10V28M26 3V28" />
          </svg>
          <StatusGroup $gap={6}>
            <StatusText>61%</StatusText>
            <svg width={21} height={34} viewBox="0 0 21 34">
              <path d="M6 2Q6 0 8 0H13Q15 0 15 2V4H17Q21 4 21 8V18H0V8Q0 4 4 4H6Z" fill="#bdbdbd" />
              <path d="M0 17H21V29Q21 33 17 33H4Q0 33 0 29Z" fill="#4a4a4a" />
            </svg>
          </StatusGroup>
        </StatusGroup>
      </StatusBar>

      <MapArea>
        <WalkMap />
        <Toolbar>
          <ToolButton $width={147} aria-label="뒤로">
            <Icon viewBox="0 0 24 24">
              <path d="M20 11H7.83l5.59-5.59L12 4l-8 8 8 8 1.41-1.41L7.83 13H20z" />
            </Icon>
          </ToolButton>
          <ToolbarActions>
            <ToolButton $width={126} aria-label="수정">
              <Icon viewBox="0 0 24 24">
                <path fillRule="evenodd" d="M3 17V21H7L20.3 7.7A1.8 1.8 0 0 0 20.3 5.2L18.8 3.7A1.8 1.8 0 0 0 16.3 3.7ZM5 17.9L15 7.9L16.1 9L6.1 19H5Z" />
              </Icon>
            </ToolButton>
            <ToolButton $width={126} aria-label="공유">
              <Icon viewBox="0 0 24 24">
                <g fill="none" stroke="currentColor" strokeWidth={2}>
                  <circle cx={18} cy={4.9} r={2.1} />
                  <circle cx={5.9} cy={12} r={2.1} />
                  <circle cx={18} cy={19.1} r={2.1} />
                  <path d="M7.8 10.9L16.2 6M7.8 13.1L16.2 18" />
                </g>
              </Icon>
            </ToolButton>
            <ToolButton $width={96} aria-label="더보기">
              <Icon viewBox="0 0 24 24">
                <circle cx={12} cy={6} r={2} />
                <circle cx={12} cy={12} r={2} />
                <circle cx={12} cy={18} r={2} />
              </Icon>
            </ToolButton>
          </ToolbarActions>
        </Toolbar>
      </MapArea>

      <Sheet>
        <Title>아침 걷기</Title>
        <DateLine>
          <WalkIcon size={42} />
          11월 19일 오전 7:24~8:38
        </DateLine>
        <Scores>
          <Score>
            <HeartPointsIcon />
            62
          </Score>
          <Score>
            <StepsIcon />
            7,938
          </Score>
        </Scores>
        <Message>
          <FitIcon />
          운동 수준이 더욱 높아졌습니다!
        </Message>
        <Metrics>
          <MetricItem icon={<TimerIcon />} name="활동 시간" value="1시간 13분 07초" />
        </Metrics>
        <Divider />
        <Metrics>
          {METRICS.map((m) => (
            <MetricItem key={m.name} {...m} />
          ))}
        </Metrics>
        <ChartBox>
          <PaceChart />
        </ChartBox>
        <NavBar>
          <NavButton aria-label="최근 앱">
            <svg width={42} height={42} viewBox="0 0 42 42" stroke="#949494" strokeWidth={4} strokeLinecap="round">
              <path d="M4 3V39M21 3V39M38 3V39" />
            </svg>
          </NavButton>
          <NavButton aria-label="홈">
            <svg width={42} height={42} viewBox="0 0 42 42" fill="none" stroke="#949494" strokeWidth={4}>
              <rect x={2} y={2} width={38} height={38} rx={13} />
            </svg>
          </NavButton>
          <NavButton aria-label="이전">
            <svg width={42} height={42} viewBox="0 0 42 42" fill="none" stroke="#949494" strokeWidth={4} strokeLinecap="round">
              <path d="M32 2L11 21L32 40" />
            </svg>
          </NavButton>
        </NavBar>
      </Sheet>
    </Screen>
  );
}
